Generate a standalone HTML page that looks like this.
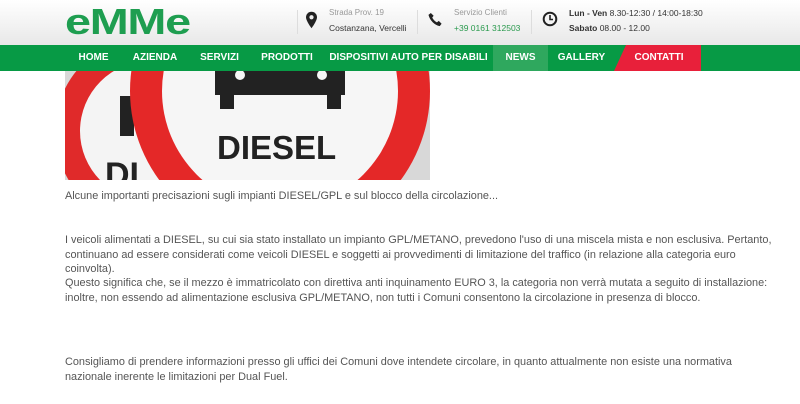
<!DOCTYPE html>
<html><head><meta charset="utf-8"><style>
*{margin:0;padding:0;box-sizing:border-box}
body{width:800px;height:404px;overflow:hidden;background:#fff;font-family:"Liberation Sans",sans-serif;position:relative}
.hdr{position:absolute;left:0;top:0;width:800px;height:45px;background:linear-gradient(#fff,#e8e8e8)}
.logo{position:absolute;left:65px;top:4px;font-size:36px;font-weight:bold;color:#1e9e50;letter-spacing:-1px;line-height:36px;transform:scaleX(1.3);transform-origin:left top}
.sep{position:absolute;top:10px;width:1px;height:24px;background:#ddd}
.s{position:absolute;font-size:8px;color:#999}
.t{position:absolute;font-size:8.5px;color:#333}
.nav{position:absolute;left:0;top:45px;width:800px;height:26px;background:#079a45}
.nav span{position:absolute;top:0;height:26px;line-height:26px;color:#fff;font-size:10px;font-weight:bold;text-align:center}
.p{position:absolute;left:65px;font-size:10.9px;color:#555;white-space:nowrap}
</style></head><body>
<div class="hdr">
<div class="logo">eMMe</div>
<div class="sep" style="left:297px"></div>
<svg style="position:absolute;left:306px;top:11px" width="11" height="18" viewBox="0 0 12 18"><path d="M6 0C2.7 0 0 2.6 0 6c0 4 6 12 6 12s6-8 6-12C12 2.6 9.3 0 6 0z" fill="#222"/><circle cx="6" cy="6" r="2.3" fill="#eee"/></svg>
<div class="s" style="left:329px;top:8px">Strada Prov. 19</div>
<div class="t" style="left:329px;top:23px">Costanzana, Vercelli</div>
<div class="sep" style="left:417px"></div>
<svg style="position:absolute;left:428px;top:12px" width="15" height="15" viewBox="0 0 16 16"><path d="M3 1l3 3-1.5 2c1 2 3 4 5 5l2-1.5 3 3-2 2.5C7 14 2 9 0.5 3z" fill="#222"/></svg>
<div class="s" style="left:454px;top:8px">Servizio Clienti</div>
<div class="t" style="left:454px;top:23px;color:#2a9a4e">+39 0161 312503</div>
<div class="sep" style="left:531px"></div>
<svg style="position:absolute;left:542px;top:11px" width="16" height="16" viewBox="0 0 16 16"><circle cx="8" cy="8" r="6.3" fill="none" stroke="#222" stroke-width="2"/><path d="M8 4v4.5h3" fill="none" stroke="#222" stroke-width="1.6"/></svg>
<div class="t" style="left:569px;top:8px"><b>Lun - Ven</b> 8.30-12:30 / 14:00-18:30</div>
<div class="t" style="left:569px;top:23px"><b>Sabato</b> 08.00 - 12.00</div>
</div>
<div class="nav">
<span style="left:66px;width:55px">HOME</span>
<span style="left:121px;width:68px">AZIENDA</span>
<span style="left:189px;width:61px">SERVIZI</span>
<span style="left:250px;width:74px">PRODOTTI</span>
<span style="left:324px;width:169px">DISPOSITIVI AUTO PER DISABILI</span>
<span style="left:493px;width:55px;background:#2fa85e">NEWS</span>
<span style="left:548px;width:67px">GALLERY</span>
<svg style="position:absolute;left:614px;top:0" width="87" height="26"><polygon points="12,0 87,0 87,26 0,26" fill="#e8203a"/></svg>
<span style="left:618px;width:82px">CONTATTI</span>
</div>
<svg style="position:absolute;left:65px;top:71px" width="365" height="109" viewBox="0 0 365 109">
<rect width="365" height="109" fill="#d8d8d8"/>
<circle cx="85" cy="60" r="95" fill="#e02a2a"/>
<circle cx="85" cy="60" r="70" fill="#f4f4f4"/>
<rect x="55" y="25" width="14" height="40" fill="#222"/>
<text x="40" y="115" font-family="Liberation Sans" font-weight="bold" font-size="34" fill="#222">DI</text>
<circle cx="215" cy="20" r="150" fill="#e42828"/>
<circle cx="215" cy="20" r="118" fill="#f6f6f6"/>
<rect x="150" y="0" width="130" height="24" fill="#222"/>
<circle cx="175" cy="4" r="5" fill="#f6f6f6"/><circle cx="257" cy="4" r="5" fill="#f6f6f6"/>
<rect x="155" y="24" width="14" height="14" fill="#222"/><rect x="262" y="24" width="14" height="14" fill="#222"/>
<text x="152" y="88" font-family="Liberation Sans" font-weight="bold" font-size="33" fill="#222">DIESEL</text>
</svg>
<div class="p" style="top:190px">Alcune importanti precisazioni sugli impianti DIESEL/GPL e sul blocco della circolazione...</div>
<div class="p" style="top:234px">I veicoli alimentati a DIESEL, su cui sia stato installato un impianto GPL/METANO, prevedono l'uso di una miscela mista e non esclusiva. Pertanto,</div>
<div class="p" style="top:249px">continuano ad essere considerati come veicoli DIESEL e soggetti ai provvedimenti di limitazione del traffico (in relazione alla categoria euro</div>
<div class="p" style="top:263px">coinvolta).</div>
<div class="p" style="top:277px">Questo significa che, se il mezzo è immatricolato con direttiva anti inquinamento EURO 3, la categoria non verrà mutata a seguito di installazione:</div>
<div class="p" style="top:292px">inoltre, non essendo ad alimentazione esclusiva GPL/METANO, non tutti i Comuni consentono la circolazione in presenza di blocco.</div>
<div class="p" style="top:356px">Consigliamo di prendere informazioni presso gli uffici dei Comuni dove intendete circolare, in quanto attualmente non esiste una normativa</div>
<div class="p" style="top:371px">nazionale inerente le limitazioni per Dual Fuel.</div>
</body></html>
